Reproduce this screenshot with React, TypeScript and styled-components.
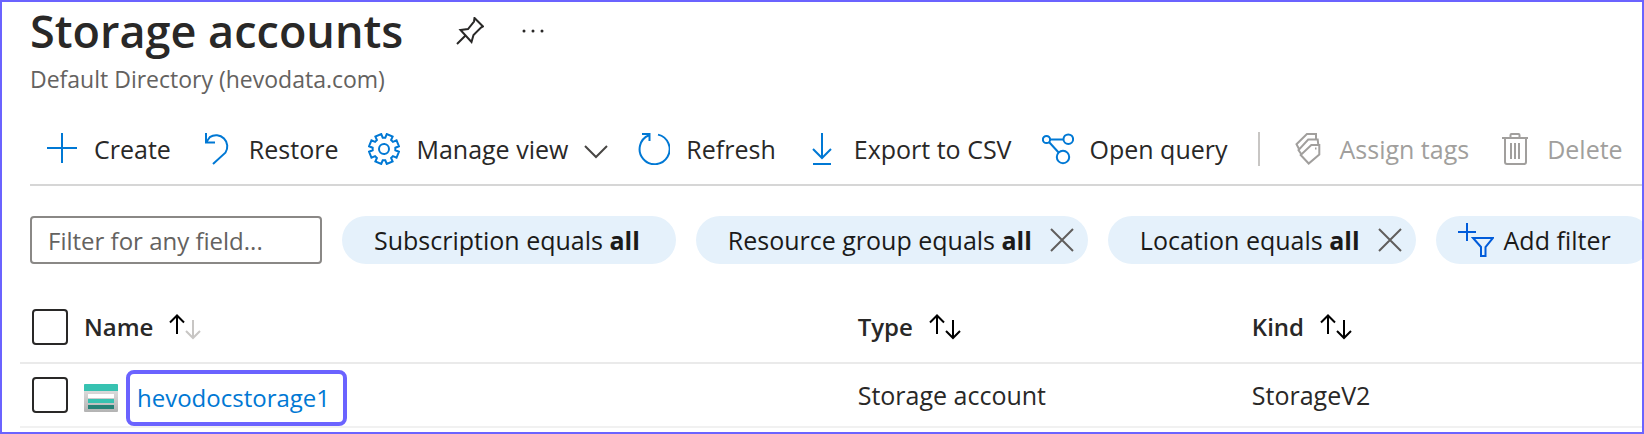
import React from 'react';
import styled, { createGlobalStyle } from 'styled-components';

const GlobalStyle = createGlobalStyle`
  *, *::before, *::after { box-sizing: border-box; }
  body {
    margin: 0;
    background: #fff;
    color: #292827;
    font-family: "Open Sans", "Segoe UI", sans-serif;
  }
  button, input { font: inherit; color: inherit; }
`;

const Frame = styled.main`
  min-height: 100vh;
  overflow: hidden;
  border: 2px solid #6b63ff;
  padding-bottom: 4px;
`;

const Header = styled.header`
  padding: 1px 0 0 28px;
`;

const TitleRow = styled.div`
  display: flex;
  align-items: center;
  gap: 37px;
`;

const Title = styled.h1`
  margin: 0 16px 0 0;
  font-size: 45px;
  font-weight: 600;
  line-height: 56px;
  white-space: nowrap;
`;

const Subtitle = styled.p`
  margin: 4px 0 0;
  font-size: 23px;
  line-height: 32px;
  color: #646260;
`;

const PlainButton = styled.button`
  display: flex;
  align-items: center;
  flex: none;
  padding: 0;
  border: 0;
  background: none;
  white-space: nowrap;
  cursor: pointer;
`;

const Toolbar = styled.div`
  display: flex;
  align-items: center;
  gap: 30px;
  margin-left: 28px;
  padding: 37px 0 18px 16px;
  border-bottom: 2px solid #d6d6d6;
`;

const Command = styled(PlainButton)`
  gap: 16px;
  font-size: 25px;
  line-height: 32px;
  &:disabled { color: #a19f9d; cursor: default; }
`;

const Divider = styled.span`
  flex: none;
  width: 2px;
  height: 34px;
  margin-right: 2px;
  background: #c8c6c4;
`;

const Icon = styled.svg<{ $tone?: string }>`
  flex: none;
  display: block;
  fill: none;
  stroke: ${(p) => p.$tone ?? '#0078d4'};
  stroke-width: 2;
`;

const Filters = styled.div`
  display: flex;
  align-items: center;
  gap: 20px;
  margin: 30px 0 0 28px;
  font-size: 25px;
  line-height: 32px;
`;

const FilterInput = styled.input`
  flex: none;
  width: 292px;
  height: 48px;
  padding: 0 16px;
  border: 2px solid #8a8886;
  border-radius: 4px;
  background: #fff;
  font-size: 24px;
  &::placeholder { color: #646260; opacity: 1; }
`;

const Pill = styled.div<{ $closable?: boolean }>`
  display: flex;
  align-items: center;
  flex: none;
  gap: 18px;
  height: 48px;
  padding: 0 ${(p) => (p.$closable ? 14 : 36)}px 0 32px;
  border-radius: 24px;
  background: #e5f1fb;
  color: #1b1a19;
`;

const PillLabel = styled(PlainButton)`
  display: block;
`;

const AddFilter = styled(PlainButton)`
  gap: 10px;
  height: 48px;
  padding: 0 40px 0 20px;
  border-radius: 24px;
  background: #e5f1fb;
  color: #1b1a19;
`;

const Table = styled.table`
  width: calc(100% - 18px);
  margin: 28px 0 0 18px;
  table-layout: fixed;
  border-collapse: separate;
  border-spacing: 0;
  text-align: left;
  line-height: 32px;
`;

const Col = styled.col<{ $width?: string }>`
  width: ${(p) => p.$width ?? 'auto'};
`;

const HeadCell = styled.th`
  height: 72px;
  padding: 0;
  border-bottom: 2px solid #eaeaea;
  font-size: 24px;
  font-weight: 600;
`;

const SortButton = styled(PlainButton)`
  gap: 16px;
`;

const Cell = styled.td<{ $align?: string }>`
  height: 64px;
  padding: 0;
  border-bottom: 2px solid #f1f1f1;
  font-size: 25px;
  vertical-align: ${(p) => p.$align ?? 'middle'};
`;

const Checkbox = styled.input`
  appearance: none;
  display: block;
  width: 36px;
  height: 36px;
  margin: 0 0 0 12px;
  border: 2px solid #292827;
  border-radius: 4px;
  background: #fff;
`;

const NameContent = styled.div`
  display: flex;
  align-items: center;
  gap: 8px;
`;

const AccountLink = styled.a`
  padding: 8px 13px 8px 7px;
  border: 4px solid #6b63ff;
  border-radius: 8px;
  color: #0078d4;
  font-size: 24px;
  text-decoration: none;
`;

const gearPath = (() => {
  const point = (deg: number, r: number) => {
    const a = (deg * Math.PI) / 180;
    return `${(16 + r * Math.cos(a)).toFixed(2)} ${(16 + r * Math.sin(a)).toFixed(2)}`;
  };
  const points: string[] = [];
  for (let i = 0; i < 8; i++) {
    const c = 22.5 + i * 45;
    points.push(point(c - 16, 11.4), point(c - 12, 15.2), point(c + 12, 15.2), point(c + 16, 11.4));
  }
  return `M${points.join('L')}Z`;
})();

const GREY = '#a19f9d';

const PlusIcon = () => (
  <Icon width="32" height="32" viewBox="0 0 32 32"><path d="M1 15H31M16 0V30" /></Icon>
);
const RestoreIcon = () => (
  <Icon width="32" height="32" viewBox="0 0 32 32">
    <path d="M5 0V9.5H14M5 9.5L8.8 4.2A11.2 11.2 0 0 1 24.4 19.7L12 31" />
  </Icon>
);
const GearIcon = () => (
  <Icon width="32" height="32" viewBox="0 0 32 32">
    <path d={gearPath} />
    <circle cx="16" cy="16" r="5" />
  </Icon>
);
const ChevronIcon = () => (
  <Icon $tone="#484644" width="24" height="32" viewBox="0 0 24 32"><path d="M1 13L12 24L23 13" /></Icon>
);
const RefreshIcon = () => (
  <Icon width="32" height="32" viewBox="0 0 32 32">
    <path d="M20 1.6A15 15 0 1 1 11 2.3M4 1H11.5V8" />
  </Icon>
);
const ExportIcon = () => (
  <Icon width="32" height="32" viewBox="0 0 32 32"><path d="M16 0V25M7 16L16 25L25 16M7 31H25" /></Icon>
);
const QueryIcon = () => (
  <Icon width="32" height="32" viewBox="0 0 32 32">
    <circle cx="4.5" cy="6.5" r="3.6" />
    <circle cx="26.3" cy="6.2" r="4.8" />
    <circle cx="21" cy="24" r="6.2" />
    <path d="M8 6.5H21.5M7 9L16.6 19.5" />
  </Icon>
);
const TagsIcon = () => (
  <Icon $tone={GREY} width="32" height="32" viewBox="0 0 32 32">
    <path d="M19.3 12H27.3V21.5L16.7 30.5L8.7 22ZM9.5 21.5L6.5 17L16.2 6.5H25.7L26.2 11M7 16L4.5 11.3L14.9 1H24V6" />
    <path d="M23 15.5H24.5" />
  </Icon>
);
const DeleteIcon = () => (
  <Icon $tone={GREY} width="32" height="32" viewBox="0 0 32 32">
    <path d="M3 5H29M11.5 5V2Q11.5 1 12.5 1H19.5Q20.5 1 20.5 2V5M6 5V29Q6 31 8 31H25Q27 31 27 29V5M12 10V26M16 10V26M20 10V26" />
  </Icon>
);
const CloseIcon = () => (
  <Icon $tone="#605e5c" width="24" height="24" viewBox="0 0 24 24"><path d="M1 1L23 23M23 1L1 23" /></Icon>
);
const AddFilterIcon = () => (
  <Icon $tone="#015cda" width="38" height="36" viewBox="0 0 38 36">
    <path d="M2 10H20M11 1V19M17 16H37L29.5 25V34H25V25Z" />
  </Icon>
);
const PinIcon = () => (
  <Icon $tone="#292827" width="28" height="28" viewBox="0 0 28 28">
    <path d="M18.5 1L27 9.5L25 10.5L17.5 18L15.5 25L4.5 13L12 12L18 4.5ZM9.5 18.5L1 27" />
  </Icon>
);
const MoreIcon = () => (
  <Icon $tone="none" width="24" height="28" viewBox="0 0 24 28">
    <g fill="#292827"><circle cx="3" cy="14" r="1.5" /><circle cx="12" cy="14" r="1.5" /><circle cx="21" cy="14" r="1.5" /></g>
  </Icon>
);
const SortIcon = ({ down = '#000' }: { down?: string }) => (
  <Icon $tone="#000" width="32" height="26" viewBox="0 0 32 26">
    <path d="M8 20V2M1 8.5L8 1.5L15 8.5" strokeWidth="2" />
    <path stroke={down} d="M24 6V24M17 17L24 24L31 17" />
  </Icon>
);
const StorageIcon = () => (
  <Icon $tone="none" width="34" height="28" viewBox="0 0 34 28">
    <defs>
      <linearGradient id="storageBody" x1="0" y1="1" x2="0" y2="0">
        <stop offset="0" stopColor="#b3b3b3" />
        <stop offset="1" stopColor="#e6e6e6" />
      </linearGradient>
    </defs>
    <rect width="34" height="28" rx="1" fill="url(#storageBody)" />
    <path d="M0 7V1Q0 0 1 0H33Q34 0 34 1V7Z" fill="#37c2b1" />
    <rect x="4" y="10" width="26" height="4" fill="#fff" />
    <rect x="4" y="15" width="26" height="4" fill="#37c2b1" />
    <rect x="4" y="21" width="26" height="4" fill="#258277" />
  </Icon>
);

export default function App() {
  return (
    <>
      <GlobalStyle />
      <Frame>
        <Header>
          <TitleRow>
            <Title>Storage accounts</Title>
            <PlainButton aria-label="Pin to dashboard"><PinIcon /></PlainButton>
            <PlainButton aria-label="More options"><MoreIcon /></PlainButton>
          </TitleRow>
          <Subtitle>Default Directory (hevodata.com)</Subtitle>
        </Header>

        <Toolbar role="toolbar" aria-label="Commands">
          <Command><PlusIcon />Create</Command>
          <Command><RestoreIcon />Restore</Command>
          <Command><GearIcon />Manage view<ChevronIcon /></Command>
          <Command><RefreshIcon />Refresh</Command>
          <Command><ExportIcon />Export to CSV</Command>
          <Command><QueryIcon />Open query</Command>
          <Divider />
          <Command disabled><TagsIcon />Assign tags</Command>
          <Command disabled><DeleteIcon />Delete</Command>
        </Toolbar>

        <Filters>
          <FilterInput type="text" aria-label="Filter" placeholder="Filter for any field..." />
          <Pill><PillLabel>Subscription equals <b>all</b></PillLabel></Pill>
          <Pill $closable>
            <PillLabel>Resource group equals <b>all</b></PillLabel>
            <PlainButton aria-label="Remove resource group filter"><CloseIcon /></PlainButton>
          </Pill>
          <Pill $closable>
            <PillLabel>Location equals <b>all</b></PillLabel>
            <PlainButton aria-label="Remove location filter"><CloseIcon /></PlainButton>
          </Pill>
          <AddFilter><AddFilterIcon />Add filter</AddFilter>
        </Filters>

        <Table>
          <colgroup>
            <Col $width="64px" />
            <Col $width="47.7%" />
            <Col $width="24.3%" />
            <Col />
          </colgroup>
          <thead>
            <tr>
              <HeadCell><Checkbox type="checkbox" aria-label="Select all" /></HeadCell>
              <HeadCell><SortButton>Name<SortIcon down="#c8c6c4" /></SortButton></HeadCell>
              <HeadCell><SortButton>Type<SortIcon /></SortButton></HeadCell>
              <HeadCell><SortButton>Kind<SortIcon /></SortButton></HeadCell>
            </tr>
          </thead>
          <tbody>
            <tr>
              <Cell><Checkbox type="checkbox" aria-label="Select hevodocstorage1" /></Cell>
              <Cell $align="bottom">
                <NameContent>
                  <StorageIcon />
                  <AccountLink href="#hevodocstorage1">hevodocstorage1</AccountLink>
                </NameContent>
              </Cell>
              <Cell>Storage account</Cell>
              <Cell>StorageV2</Cell>
            </tr>
          </tbody>
        </Table>
      </Frame>
    </>
  );
}
